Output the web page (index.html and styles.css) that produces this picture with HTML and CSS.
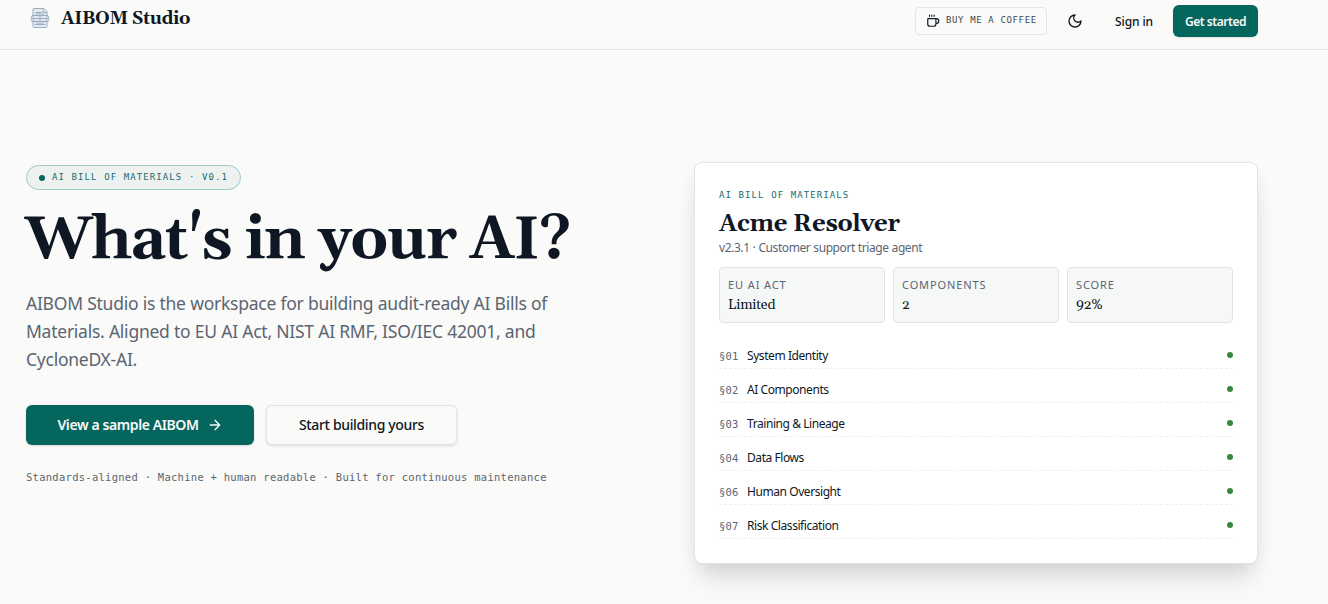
FILE: index.html
```html
<!DOCTYPE html>
<html lang="en">
<head>
    <meta charset="UTF-8">
    <meta name="viewport" content="width=device-width, initial-scale=1.0">
    <title>AIBOM Studio</title>
    <link rel="stylesheet" href="styles.css">
</head>
<body>
    <header class="header">
        <a class="brand">
            <svg class="brand-icon" viewBox="0 0 20 22" fill="none" stroke="#9aacbf" stroke-width="1">
                <path d="M4 1.5h10l3 3v15a1 1 0 0 1-1 1H4a1 1 0 0 1-1-1v-17a1 1 0 0 1 1-1z" fill="#e3e9ee"/>
                <path d="M13 1.5v4h4M2 8.5h16l1 3-1 3H2l-1-3zM3 11.5h14M10 5.5v12M5 5.5h5M5 17.5h10M6 8l4-3 4 3M6 15l4 3 4-3"/>
            </svg>
            <span class="brand-name">AIBOM Studio</span>
        </a>
        <nav class="nav">
            <a class="coffee">
                <svg width="14" height="14" viewBox="0 0 24 24" fill="none" stroke="currentColor" stroke-width="2" stroke-linecap="round" stroke-linejoin="round">
                    <path d="M10 2v2M14 2v2M6 2v2"/>
                    <path d="M16 8a1 1 0 0 1 1 1v8a4 4 0 0 1-4 4H7a4 4 0 0 1-4-4V9a1 1 0 0 1 1-1h14a4 4 0 1 1 0 8h-1"/>
                </svg>
                <span class="coffee-text">BUY ME A COFFEE</span>
            </a>
            <button class="theme" aria-label="Theme">
                <svg width="16" height="16" viewBox="0 0 24 24" fill="none" stroke="currentColor" stroke-width="2" stroke-linecap="round" stroke-linejoin="round">
                    <path d="M12 3a6 6 0 0 0 9 9 9 9 0 1 1-9-9Z"/>
                </svg>
            </button>
            <a class="signin">Sign in</a>
            <a class="get-started">Get started</a>
        </nav>
    </header>

    <main class="hero">
        <section class="intro">
            <div class="badge"><span class="badge-dot"></span><span class="badge-text">AI BILL OF MATERIALS · V0.1</span></div>
            <h1>What's in your AI?</h1>
            <p class="lead">AIBOM Studio is the workspace for building audit-ready AI Bills of Materials. Aligned to EU AI Act, NIST AI RMF, ISO/IEC 42001, and CycloneDX-AI.</p>
            <div class="actions">
                <a class="btn btn-primary">
                    <span>View a sample AIBOM</span>
                    <svg width="16" height="16" viewBox="0 0 24 24" fill="none" stroke="currentColor" stroke-width="2" stroke-linecap="round" stroke-linejoin="round">
                        <path d="M5 12h14M12 5l7 7-7 7"/>
                    </svg>
                </a>
                <a class="btn btn-outline">Start building yours</a>
            </div>
            <p class="note">Standards-aligned · Machine + human readable · Built for continuous maintenance</p>
        </section>

        <section class="card">
            <div class="card-label">AI BILL OF MATERIALS</div>
            <h2>Acme Resolver</h2>
            <p class="card-sub">v2.3.1 · Customer support triage agent</p>
            <div class="stats">
                <div class="stat"><div class="stat-label">EU AI ACT</div><div class="stat-value">Limited</div></div>
                <div class="stat"><div class="stat-label">COMPONENTS</div><div class="stat-value">2</div></div>
                <div class="stat"><div class="stat-label">SCORE</div><div class="stat-value">92%</div></div>
            </div>
            <ul class="sections">
                <li><span class="num">§01</span><span class="name">System Identity</span><span class="dot"></span></li>
                <li><span class="num">§02</span><span class="name">AI Components</span><span class="dot"></span></li>
                <li><span class="num">§03</span><span class="name">Training &amp; Lineage</span><span class="dot"></span></li>
                <li><span class="num">§04</span><span class="name">Data Flows</span><span class="dot"></span></li>
                <li><span class="num">§06</span><span class="name">Human Oversight</span><span class="dot"></span></li>
                <li><span class="num">§07</span><span class="name">Risk Classification</span><span class="dot"></span></li>
            </ul>
        </section>
    </main>
</body>
</html>
```
FILE: styles.css
```css
* {
    box-sizing: border-box;
}

body {
    margin: 0;
    height: 604px;
    overflow: hidden;
    background: #fafaf8;
    color: #0f1724;
    font-family: "Noto Sans", sans-serif;
}

h1, h2, p, ul {
    margin: 0;
    padding: 0;
}

.header {
    display: flex;
    justify-content: space-between;
    height: 50px;
    padding: 0 70px 0 30px;
    border-bottom: 1px solid #e5e7e7;
}

.brand {
    display: flex;
    align-items: center;
    height: 36px;
    gap: 11px;
}

.brand-icon {
    width: 20px;
    height: 22px;
}

.brand-name {
    padding-top: 2px;
    font: bold 18px/24px Gelasio, Georgia, "Liberation Serif", serif;
    letter-spacing: -0.4px;
}

.nav {
    display: flex;
    align-items: center;
    height: 42px;
}

.coffee {
    display: flex;
    align-items: center;
    gap: 6px;
    width: 132px;
    height: 28px;
    padding-left: 10px;
    border: 1px solid #dfe7e9;
    border-radius: 4px;
}

.coffee-text {
    padding-bottom: 2px;
    font: 9px/14px "DejaVu Sans Mono", monospace;
    letter-spacing: 0.63px;
    white-space: nowrap;
    color: #414955;
}

.theme {
    display: flex;
    align-items: center;
    justify-content: center;
    width: 32px;
    height: 32px;
    margin-left: 12px;
    padding: 0;
    border: 0;
    background: none;
    color: inherit;
}

.signin {
    margin-left: 24px;
    width: 58px;
    font-size: 12px;
    font-weight: 500;
    letter-spacing: -0.1px;
}

.get-started {
    display: flex;
    align-items: center;
    justify-content: center;
    width: 85px;
    height: 32px;
    border-radius: 6px;
    background: #05665e;
    color: #f8fafa;
    font-size: 12px;
    font-weight: 600;
    letter-spacing: -0.45px;
    white-space: nowrap;
    box-shadow: 0 1px 2px rgba(0, 0, 0, 0.1);
}

.hero {
    display: grid;
    grid-template-columns: 564px 564px;
    justify-content: space-between;
    padding: 112px 70px 0 26px;
}

.intro {
    padding-top: 3px;
}

.badge {
    display: flex;
    align-items: center;
    gap: 7px;
    width: 215px;
    height: 25px;
    padding-left: 12px;
    border: 1px solid #a0c8c6;
    border-radius: 13px;
    background: #edf1f0;
}

.badge-dot {
    width: 6px;
    height: 6px;
    border-radius: 50%;
    background: #05665e;
}

.badge-text {
    padding-bottom: 1px;
    font: 9px/14px "DejaVu Sans Mono", monospace;
    letter-spacing: 1.1px;
    white-space: nowrap;
    color: #176b70;
}

h1 {
    margin: 19px 0 0 -1px;
    font: bold 60px/64px Gelasio, Georgia, "Liberation Serif", serif;
    letter-spacing: -1.5px;
    white-space: nowrap;
}

.lead {
    margin-top: 16px;
    font-size: 17.5px;
    line-height: 28px;
    letter-spacing: -0.25px;
    word-spacing: 0.1px;
    color: #5a6572;
}

.actions {
    display: flex;
    gap: 12px;
    margin-top: 32px;
}

.btn {
    display: flex;
    align-items: center;
    justify-content: center;
    gap: 8px;
    height: 40px;
    padding-bottom: 1px;
    border-radius: 6px;
    font-size: 14px;
    letter-spacing: -0.4px;
    white-space: nowrap;
    box-shadow: 0 1px 3px rgba(0, 0, 0, 0.12);
}

.btn-primary {
    width: 228px;
    background: #05665e;
    color: #f8fafa;
    font-weight: 600;
}

.btn-outline {
    width: 191px;
    border: 1px solid #dfe5e7;
    background: #fafaf8;
    font-weight: 500;
    letter-spacing: -0.35px;
}

.note {
    margin-top: 24px;
    font: 10.5px/16px "DejaVu Sans Mono", monospace;
    letter-spacing: 0.27px;
    color: #5a6572;
    white-space: nowrap;
}

.card {
    height: 402px;
    padding: 24px;
    border: 1px solid #dde5e8;
    border-radius: 8px;
    background: #fff;
    box-shadow: 0 20px 25px -5px rgba(0, 0, 0, 0.1), 0 8px 20px -6px rgba(0, 0, 0, 0.1);
}

.card-label {
    font: 9px/16px "DejaVu Sans Mono", monospace;
    letter-spacing: 1.1px;
    color: #176b70;
}

h2 {
    margin-top: 5px;
    font: bold 24px/32px Gelasio, Georgia, "Liberation Serif", serif;
    letter-spacing: -0.22px;
}

.card-sub {
    margin-top: -1px;
    font-size: 12px;
    line-height: 18px;
    letter-spacing: -0.42px;
    word-spacing: 0.3px;
    color: #5a6572;
}

.stats {
    display: grid;
    grid-template-columns: repeat(3, 1fr);
    gap: 8px;
    margin-top: 10px;
}

.stat {
    height: 56px;
    padding: 9px 8px;
    border: 1px solid #dde5e8;
    border-radius: 4px;
    background: #f6f8f8;
}

.stat-label {
    font-size: 11px;
    line-height: 16px;
    letter-spacing: 0.9px;
    color: #5a6572;
}

.stat-value {
    margin-top: 2px;
    font: 14px/20px Gelasio, Georgia, "Liberation Serif", serif;
    letter-spacing: -0.2px;
}

.sections {
    margin-top: 12px;
    list-style: none;
}

.sections li {
    display: flex;
    align-items: center;
    height: 34px;
    padding: 10px 0 3px;
    border-bottom: 1px dashed #eceef0;
    font-size: 12px;
    line-height: 20px;
}

.num {
    width: 28px;
    padding-top: 1px;
    font-family: "DejaVu Sans Mono", monospace;
    font-size: 10.5px;
    letter-spacing: 0.2px;
    color: #5a6572;
}

.name {
    padding-top: 1px;
    letter-spacing: -0.43px;
}

.dot {
    width: 6px;
    height: 6px;
    margin-left: auto;
    border-radius: 50%;
    background: #37883f;
}
```
